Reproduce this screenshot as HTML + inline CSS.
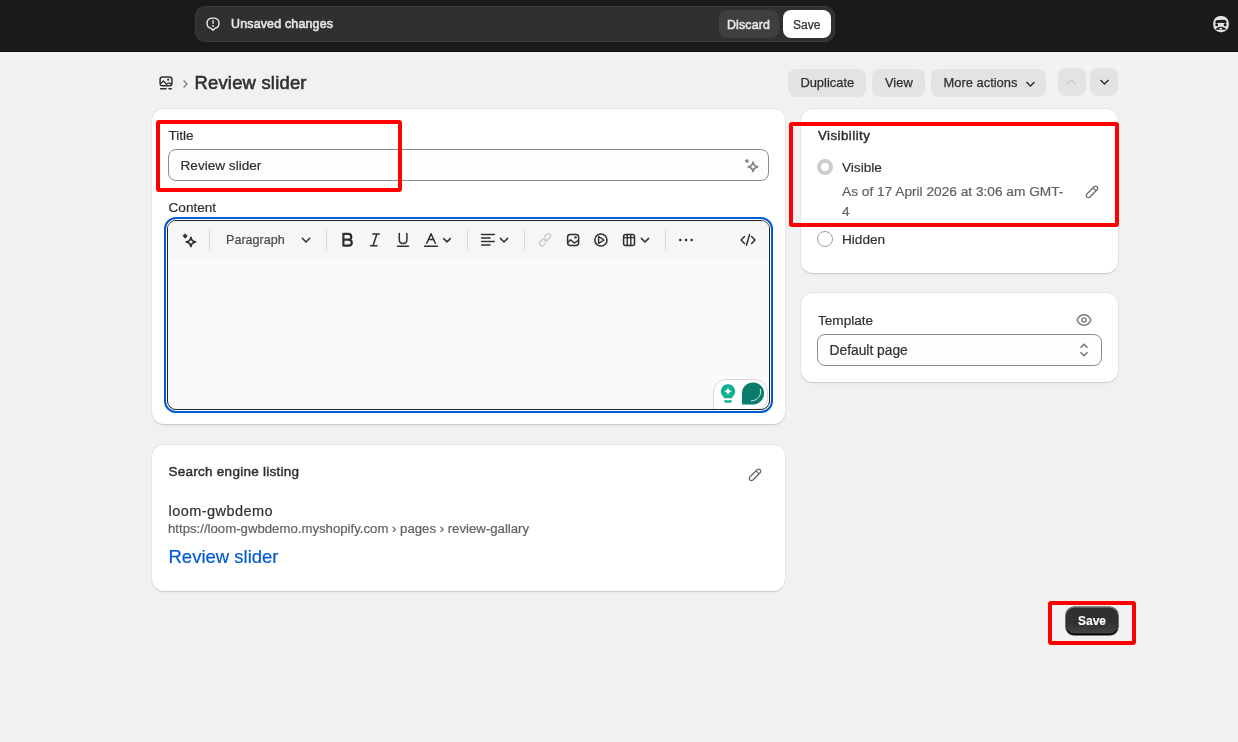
<!DOCTYPE html>
<html><head><meta charset="utf-8">
<style>
*{box-sizing:border-box;margin:0;padding:0}
html,body{width:1238px;height:742px;overflow:hidden;background:#f1f1f1;font-family:"Liberation Sans",sans-serif;color:#303030}
.a{position:absolute}
.t{position:absolute;line-height:1;white-space:nowrap;-webkit-text-stroke-width:.2px}
.card{position:absolute;background:#fff;border-radius:12px;box-shadow:0 1px 0 0 rgba(26,26,26,.1),0 0 0 1px rgba(0,0,0,.045),0 3px 4px -2px rgba(0,0,0,.07)}
.btn{position:absolute;background:#e3e3e3;border-radius:8px}
.red{position:absolute;border:4px solid #ff0000;border-radius:3px}
svg{position:absolute;overflow:visible}
#root{position:absolute;left:0;top:0;width:1238px;height:742px;will-change:transform}
</style></head><body><div id="root">

<!-- TOP BAR -->
<div class="a" style="left:0;top:0;width:1238px;height:52px;background:#1a1a1a"></div>
<div class="a" style="left:0;top:51px;width:1238px;height:1px;background:#0f0f0f"></div>
<div class="a" style="left:195px;top:6px;width:640px;height:36px;background:#303030;border:1px solid #3c3c3c;border-radius:10px"></div>
<!-- alert icon -->
<svg style="left:0;top:0" width="300" height="52" viewBox="0 0 300 52">
  <path d="M213 18.1 C217.5 18.1 219 19.6 219 23.1 C219 26.5 217.7 28 215.1 28.2 L213 30.3 L210.9 28.2 C208.3 28 207 26.5 207 23.1 C207 19.6 208.5 18.1 213 18.1z" fill="none" stroke="#e8e8e8" stroke-width="1.45" stroke-linejoin="round"/>
  <rect x="212.3" y="20.1" width="1.5" height="3.8" fill="#d8d8d8"/>
  <rect x="212.3" y="25.1" width="1.5" height="1.7" fill="#f0f0f0"/>
</svg>
<div class="t" style="left:231px;top:18.1px;font-size:12.4px;letter-spacing:.2px;-webkit-text-stroke:.6px #e3e3e3;color:#e3e3e3">Unsaved changes</div>
<div class="a" style="left:719px;top:10px;width:60px;height:28px;background:#3f3f3f;border-radius:8px"></div>
<div class="t" style="left:727px;top:19px;font-size:12.4px;letter-spacing:.15px;-webkit-text-stroke:.6px #e3e3e3;color:#e3e3e3">Discard</div>
<div class="a" style="left:783px;top:10px;width:48px;height:28px;background:#fff;border-radius:8px"></div>
<div class="t" style="left:793px;top:18.5px;font-size:12px;color:#303030;-webkit-text-stroke:.25px #303030">Save</div>
<!-- avatar -->
<svg style="left:0;top:0" width="1238" height="60" viewBox="0 0 1238 60">
  <rect x="1213.2" y="15.9" width="15.6" height="16.3" rx="7.2" fill="#e4e4e4"/>
  <path d="M1215.4 21.4 Q1215.6 19.9 1217.2 20.3 Q1221 19.3 1225 19.9 Q1226.6 20.3 1226.5 22 L1226.3 23.4 Q1221 22.2 1215.6 23.4z" fill="#1a1a1a"/>
  <circle cx="1216.7" cy="24.9" r="1.45" fill="#1a1a1a"/>
  <circle cx="1225.1" cy="24.9" r="1.45" fill="#1a1a1a"/>
  <path d="M1215.3 29.4 Q1217 26.6 1220.9 26.7 Q1224.8 26.6 1226.5 29.4 Q1223.5 30.2 1220.9 29.6 Q1218.3 30.2 1215.3 29.4z" fill="#1a1a1a"/>
  <ellipse cx="1220.8" cy="28.6" rx="1.5" ry="0.9" fill="#e4e4e4"/>
</svg>

<!-- HEADER -->
<svg style="left:159px;top:76px" width="14" height="15" viewBox="0 0 14 15">
  <rect x="1.1" y="1.1" width="11.8" height="8.6" rx="2.3" fill="none" stroke="#303030" stroke-width="1.5"/>
  <path d="M1.5 7.8 L4.3 5 L7.6 8.3 L10.2 6.8 L12.6 8.4" fill="none" stroke="#303030" stroke-width="1.3" stroke-linejoin="round"/>
  <circle cx="9.2" cy="3.7" r="1.1" fill="#303030"/>
  <rect x="0.8" y="12" width="7" height="1.5" rx=".7" fill="#303030"/>
  <rect x="9.2" y="12" width="3.9" height="1.5" rx=".7" fill="#303030"/>
</svg>
<svg style="left:182px;top:79px" width="7" height="10" viewBox="0 0 7 10">
  <path d="M1.6 1.5 L5 5 L1.6 8.5" fill="none" stroke="#747474" stroke-width="1.15"/>
</svg>
<div class="t" style="left:194.5px;top:74.2px;font-size:18.4px;letter-spacing:.22px;-webkit-text-stroke:.6px #303030;color:#303030">Review slider</div>

<div class="btn" style="left:788px;top:69px;width:78px;height:28px"></div>
<div class="t" style="left:800.4px;top:77.1px;font-size:12.9px;color:#303030;-webkit-text-stroke:.25px #303030">Duplicate</div>
<div class="btn" style="left:872px;top:69px;width:53px;height:28px"></div>
<div class="t" style="left:885px;top:77.1px;font-size:12.9px;color:#303030;-webkit-text-stroke:.25px #303030">View</div>
<div class="btn" style="left:931px;top:69px;width:115px;height:28px"></div>
<div class="t" style="left:943.6px;top:77.1px;font-size:12.9px;color:#303030;-webkit-text-stroke:.25px #303030">More actions</div>
<svg style="left:1025px;top:79.6px" width="11" height="8" viewBox="0 0 11 8">
  <path d="M1.5 2 L5.5 6 L9.5 2" fill="none" stroke="#303030" stroke-width="1.5"/>
</svg>
<div class="btn" style="left:1058px;top:68px;width:28px;height:28px"></div>
<svg style="left:1066px;top:78px" width="11" height="8" viewBox="0 0 11 8">
  <path d="M1.5 6 L5.5 2 L9.5 6" fill="none" stroke="#cccccc" stroke-width="1.5"/>
</svg>
<div class="btn" style="left:1090px;top:68px;width:28px;height:28px"></div>
<svg style="left:1098.5px;top:78px" width="11" height="8" viewBox="0 0 11 8">
  <path d="M1.5 2 L5.5 6 L9.5 2" fill="none" stroke="#303030" stroke-width="1.5"/>
</svg>

<!-- LEFT CARD 1 -->
<div class="card" style="left:152px;top:109px;width:633px;height:315px"></div>
<div class="t" style="left:168.5px;top:128.7px;font-size:13.6px">Title</div>
<div class="a" style="left:168px;top:149px;width:601px;height:32px;background:#fdfdfd;border:1px solid #8a8a8a;border-radius:8px"></div>
<div class="t" style="left:180.5px;top:158.6px;font-size:13.6px">Review slider</div>
<!-- sparkle -->
<svg style="left:0;top:0" width="1238" height="742" viewBox="0 0 1238 742">
  <path d="M747 158.7 L749.3 161 L747 163.3 L744.7 161z" fill="#8a8a8a"/>
  <path d="M753 162.1 Q753.7 166.1 757.7 166.8 Q753.7 167.5 753 171.5 Q752.3 167.5 748.3 166.8 Q752.3 166.1 753 162.1z" fill="none" stroke="#858585" stroke-width="1.7" stroke-linejoin="round"/>
</svg>
<div class="t" style="left:168.5px;top:200.8px;font-size:13.6px">Content</div>

<!-- editor -->
<div class="a" style="left:164px;top:217px;width:609px;height:196px;border:2px solid #005bd3;border-radius:12px"></div>
<div class="a" style="left:167px;top:220px;width:603px;height:190px;border:1px solid #1f1f1f;border-radius:9px;background:#fafafa;overflow:hidden">
  <div style="position:absolute;left:0;top:0;width:100%;height:37px;background:#f6f6f6"></div>
  <div style="position:absolute;left:545px;top:158px;width:55px;height:31px;background:#fff;border:1px solid #d5d8e2;border-radius:13px 13px 12px 0"></div>
</div>
<svg style="left:0;top:0" width="1238" height="742" viewBox="0 0 1238 742">
  <g fill="none" stroke="#303030" stroke-width="1.6" stroke-linecap="round" stroke-linejoin="round">
    <!-- sparkle -->
    <path d="M185.2 234 L187.3 236.1 L185.2 238.2 L183.1 236.1z" fill="#303030" stroke-width="0.8"/>
    <path d="M190.9 237.3 Q191.6 241.2 195.5 241.9 Q191.6 242.6 190.9 246.5 Q190.2 242.6 186.3 241.9 Q190.2 241.2 190.9 237.3z" stroke-width="1.7"/>
    <!-- separators -->
    <path d="M209.5 230.5 V249.5 M326.5 230.5 V249.5 M467.5 230.5 V249.5 M524.5 230.5 V249.5 M665.5 230.5 V249.5" stroke="#d6d6d6" stroke-width="1" stroke-linecap="butt"/>
    <!-- paragraph chevron -->
    <path d="M302.3 238.3 L306 242 L309.7 238.3" stroke-width="1.5"/>
    <!-- B -->
    <path d="M343.4 233.9 H348 Q351.3 233.9 351.3 236.9 Q351.3 239.4 348.3 239.6 Q351.8 239.8 351.8 242.7 Q351.8 245.6 348.3 245.6 H343.4z M343.4 239.6 H348.3" stroke-width="2.2"/>
    <!-- I -->
    <path d="M372.8 234 H379.3 M370.6 245.8 H377 M376.9 234 L373 245.8" stroke-width="1.5"/>
    <!-- U -->
    <path d="M399.3 233.6 V239.6 Q399.3 243.6 403.1 243.6 Q406.9 243.6 406.9 239.6 V233.6 M397.6 246.3 H408.6" stroke-width="1.5"/>
    <!-- A -->
    <path d="M426.8 243.3 L431 233.7 L435.3 243.3 M428.4 239.6 H433.6 M424.5 246.3 H437.4" stroke-width="1.5"/>
    <path d="M443.7 238.6 L447 241.9 L450.3 238.6" stroke-width="1.5"/>
    <!-- align -->
    <path d="M481.6 234.5 H494.3 M481.6 238.1 H490 M481.6 241.6 H494.3 M481.6 245.1 H490" stroke-width="1.5"/>
    <path d="M500.4 238.4 L504 242 L507.6 238.4" stroke-width="1.5"/>
    <!-- link (disabled) -->
    <g stroke="#cccccc" stroke-width="1.5">
      <path d="M544.6 236.2 L546.6 234.2 Q548.3 232.6 550 234.3 Q551.6 236 550 237.7 L547.6 240.1 Q546 241.6 544.4 240.1"/>
      <path d="M545.6 243.3 L543.6 245.3 Q541.9 246.9 540.2 245.2 Q538.6 243.5 540.2 241.8 L542.6 239.4 Q544.2 237.9 545.8 239.4"/>
    </g>
    <!-- image -->
    <rect x="567.6" y="234.6" width="11" height="10.8" rx="2.6" stroke-width="1.5"/>
    <circle cx="575.5" cy="237.4" r="1.2" fill="#303030" stroke="none"/>
    <path d="M567.8 242.4 L570.6 239.8 L574.4 243 L578.4 240.4" stroke-width="1.4"/>
    <!-- play -->
    <circle cx="600.9" cy="240" r="6.1" stroke-width="1.5"/>
    <path d="M598.6 236.6 V243.4 L604 240z" stroke-width="1.4"/>
    <!-- table -->
    <rect x="623.6" y="234.4" width="10.9" height="11" rx="2" stroke-width="1.5"/>
    <path d="M623.8 237.6 H634.3 M627.3 234.6 V245.2 M630.8 234.6 V245.2" stroke-width="1.4"/>
    <path d="M641.4 238.4 L645 242 L648.6 238.4" stroke-width="1.5"/>
    <!-- dots -->
    <circle cx="680.3" cy="240" r="1.3" fill="#303030" stroke="none"/>
    <circle cx="686" cy="240" r="1.3" fill="#303030" stroke="none"/>
    <circle cx="691.6" cy="240" r="1.3" fill="#303030" stroke="none"/>
    <!-- code -->
    <path d="M744.5 236.5 L741.1 240 L744.5 243.5 M751.6 236.5 L755 240 L751.6 243.5 M749.6 234.6 L746.4 245.2" stroke-width="1.5"/>
  </g>
</svg>
<svg style="left:0;top:0" width="1238" height="742" viewBox="0 0 1238 742">
  <path d="M728 384.2 a7.1 7.1 0 0 1 5.2 11.9 L731.6 398.3 H724.4 L722.8 396.1 A7.1 7.1 0 0 1 728 384.2z" fill="#12b092"/>
  <path d="M723.9 400.2 H732.1 L731.3 402.2 Q731 402.8 730.3 402.8 H725.7 Q725 402.8 724.7 402.2z" fill="#12b092"/>
  <path d="M728 387.3 Q728.6 390.7 732 391.3 Q728.6 391.9 728 395.3 Q727.4 391.9 724 391.3 Q727.4 390.7 728 387.3z" fill="#fff"/>
  <path d="M742 393.4 A11 11 0 1 1 753 404.4 H742z" fill="#0b7c6c"/>
  <path d="M760.4 389.4 A9 9 0 0 1 751.4 400.8" fill="none" stroke="#dff2ee" stroke-width="0.9" stroke-linecap="round"/>
</svg>
<div class="t" style="left:226px;top:233.6px;font-size:12.6px;color:#4a4a4a">Paragraph</div>

<!-- SEARCH CARD -->
<div class="card" style="left:152px;top:445px;width:633px;height:145.5px"></div>
<div class="t" style="left:168.5px;top:464.7px;font-size:13.5px;letter-spacing:.26px;-webkit-text-stroke:.45px #303030">Search engine listing</div>
<svg style="left:746px;top:466px" width="16" height="16" viewBox="0 0 16 16">
  <g transform="translate(9 8.9) rotate(-45)" fill="none" stroke="#6a6a6a" stroke-width="1.3"><rect x="-7.2" y="-2.1" width="14.4" height="4.2" rx="2.1"/><path d="M3.6 -2.1 V2.1"/></g>
</svg>
<div class="t" style="left:168.5px;top:503.6px;font-size:14.5px;letter-spacing:.45px">loom-gwbdemo</div>
<div class="t" style="left:168px;top:521.6px;font-size:13.2px;color:#616161">https://loom-gwbdemo.myshopify.com › pages › review-gallary</div>
<div class="t" style="left:168.5px;top:547.7px;font-size:18.5px;color:#005bd3">Review slider</div>

<!-- VISIBILITY CARD -->
<div class="card" style="left:801px;top:109px;width:317px;height:163.5px"></div>
<div class="t" style="left:818px;top:128.7px;font-size:13.3px;letter-spacing:.45px;-webkit-text-stroke:.45px #303030">Visibility</div>
<div class="a" style="left:817px;top:159px;width:16px;height:16px;border:4px solid #cccccc;border-radius:50%;background:#fff"></div>
<div class="t" style="left:842px;top:160.6px;font-size:13.6px">Visible</div>
<div class="t" style="left:842px;top:184.8px;font-size:13.7px;color:#616161">As of 17 April 2026 at 3:06 am GMT-</div>
<div class="t" style="left:842px;top:204.5px;font-size:13.7px;color:#616161">4</div>
<svg style="left:1083px;top:183px" width="16" height="16" viewBox="0 0 16 16">
  <g transform="translate(9 8.9) rotate(-45)" fill="none" stroke="#6a6a6a" stroke-width="1.3"><rect x="-7.2" y="-2.1" width="14.4" height="4.2" rx="2.1"/><path d="M3.6 -2.1 V2.1"/></g>
</svg>
<div class="a" style="left:817px;top:231px;width:16px;height:16px;border:1px solid #a0a0a0;border-radius:50%;background:#fff"></div>
<div class="t" style="left:842px;top:232.6px;font-size:13.6px">Hidden</div>

<!-- TEMPLATE CARD -->
<div class="card" style="left:801px;top:293px;width:317px;height:89px"></div>
<div class="t" style="left:818px;top:313.5px;font-size:13.6px">Template</div>

<div class="a" style="left:817px;top:334px;width:285px;height:32px;background:#fdfdfd;border:1px solid #8a8a8a;border-radius:8px"></div>
<div class="t" style="left:829.5px;top:344.1px;font-size:13.8px">Default page</div>
<svg style="left:0;top:0" width="1238" height="742" viewBox="0 0 1238 742">
  <path d="M1077.1 320 C1078.6 316.4 1081 314.8 1084 314.8 C1087 314.8 1089.4 316.4 1090.9 320 C1089.4 323.6 1087 325.2 1084 325.2 C1081 325.2 1078.6 323.6 1077.1 320z" fill="none" stroke="#767676" stroke-width="1.4"/>
  <circle cx="1084" cy="320" r="2.1" fill="none" stroke="#767676" stroke-width="1.4"/>
  <path d="M1080.5 347.8 L1084 344.3 L1087.5 347.8 M1080.5 352.2 L1084 355.7 L1087.5 352.2" fill="none" stroke="#6f6f6f" stroke-width="1.4"/>
</svg>


<!-- BOTTOM SAVE -->
<div class="a" style="left:1066px;top:607px;width:52px;height:28px;border-radius:8px;background:linear-gradient(#303030 55%,#474747);box-shadow:0 0 0 .6px #1a1a1a,inset 0 -1.6px 0 #000,inset 0 1px 0 rgba(255,255,255,.25)"></div>
<div class="t" style="left:1078px;top:614.8px;font-size:12px;font-weight:bold;-webkit-text-stroke-width:.1px;color:#fff">Save</div>

<!-- RED BOXES -->
<div class="red" style="left:156px;top:120px;width:246px;height:71.5px"></div>
<div class="red" style="left:789px;top:122px;width:329.5px;height:104.5px"></div>
<div class="red" style="left:1048px;top:600.7px;width:88.3px;height:44.4px"></div>

</div></body></html>
